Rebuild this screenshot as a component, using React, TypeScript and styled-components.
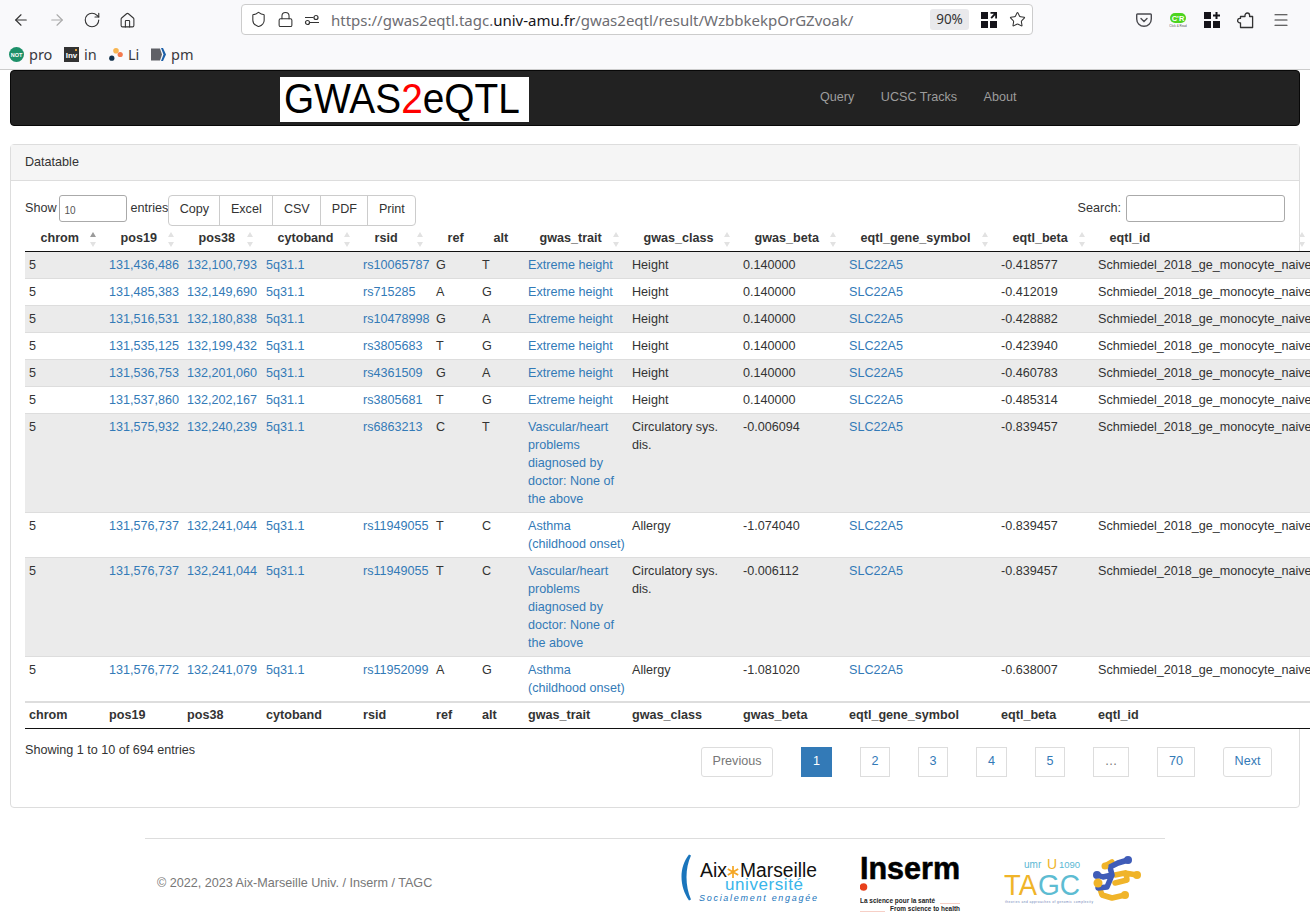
import React from "react";
import styled, { createGlobalStyle } from "styled-components";
import { ArrowLeft, ArrowRight, RotateCw, Home, Shield, Lock, Star, Menu } from "lucide-react";

const blue = "#337ab7";

const GlobalStyle = createGlobalStyle`
  html, body {
    margin: 0;
    padding: 0;
    overflow: hidden;
    background: #fff;
    color: #333;
    font-family: "Liberation Sans", Arial, sans-serif;
    font-size: 12.6px;
    line-height: 18px;
  }
  * { box-sizing: border-box; }
`;

const Page = styled.div`
  width: 1310px;
  height: 917px;
  overflow: hidden;
`;

/* browser chrome */
const Chrome = styled.div`
  height: 70px;
  background: #f9f9fb;
  border-bottom: 1px solid #ccc;
  font-family: "Noto Sans", sans-serif;
  color: #333;
`;

const Toolbar = styled.div`
  height: 40px;
  display: flex;
  align-items: center;
`;

const NavIcons = styled.div`
  width: 241px;
  padding-left: 12px;
  display: flex;
  gap: 17.5px;
  align-items: center;
`;

const UrlBar = styled.div`
  width: 792px;
  height: 31px;
  margin-top: -1px;
  background: #fff;
  border: 1px solid #ccc;
  border-radius: 4px;
  display: flex;
  align-items: center;
  padding-left: 8px;
  gap: 10px;
`;

const UrlText = styled.div`
  flex: 1;
  margin-left: 1px;
  font-size: 15px;
  color: #6d6d72;
  white-space: nowrap;
  b { font-weight: 400; color: #15141a; }
`;

const Zoom = styled.div`
  width: 39px;
  height: 21px;
  background: #e9e9ec;
  border-radius: 3px;
  font-size: 13.5px;
  line-height: 21px;
  text-align: center;
  margin-right: 2px;
`;

const ToolIcons = styled.div`
  margin-left: 103px;
  display: flex;
  gap: 17px;
  align-items: center;
`;

const Bookmarks = styled.div`
  height: 29px;
  padding: 0 0 2px 9px;
  display: flex;
  align-items: center;
  font-size: 14.5px;
  color: #3a3a40;
  svg { margin-top: 2px; }
`;

const Bookmark = styled.div<{ $w: number }>`
  width: ${(p) => p.$w}px;
  display: flex;
  align-items: center;
  gap: 5px;
  white-space: nowrap;
`;

/* navbar */
const NavBar = styled.div`
  margin: 0 10px;
  height: 56px;
  background: #222;
  border: 1px solid #080808;
  border-radius: 4px;
  padding: 6px 0 0 269px;
  display: flex;
  align-items: flex-start;
`;

const Logo = styled.div`
  width: 249px;
  height: 45px;
  background: #fff;
  color: #000;
  padding-left: 4px;
  white-space: nowrap;
`;

const LogoWord = styled.div`
  font-size: 42.5px;
  line-height: 43px;
  transform: scaleX(0.913);
  transform-origin: left center;
  span { color: #f00; }
`;

const NavLinks = styled.div`
  margin-left: 291px;
  display: flex;
  gap: 26.5px;
  height: 39px;
  align-items: center;
`;

const NavLink = styled.a`
  color: #9d9d9d;
`;

/* panel */
const Panel = styled.div`
  margin: 18px 10px 0;
  height: 664px;
  border: 1px solid #ddd;
  border-radius: 4px;
`;

const PanelHead = styled.div`
  height: 36px;
  padding: 8px 14px;
  background: #f5f5f5;
  border-bottom: 1px solid #ddd;
`;

const PanelBody = styled.div`
  padding: 14px 14px 0;
`;

const Controls = styled.div`
  display: flex;
  justify-content: space-between;
  height: 30px;
`;

const LengthGroup = styled.div`
  display: flex;
  align-items: flex-start;
`;

const Label = styled.span`
  line-height: 27px;
`;

const LengthInput = styled.div`
  width: 68px;
  height: 27px;
  margin: 0 4px 0 2px;
  border: 1px solid #aaa;
  border-radius: 3px;
  font-size: 10px;
  line-height: 30px;
  padding-left: 5px;
  color: #555;
`;

const ButtonGroup = styled.div`
  display: flex;
  height: 31px;
  border: 1px solid #ccc;
  border-radius: 4px;
`;

const GroupButton = styled.div<{ $w: number }>`
  width: ${(p) => p.$w}px;
  text-align: center;
  line-height: 26px;
  & + & { border-left: 1px solid #ccc; }
`;

const SearchInput = styled.div`
  width: 159px;
  height: 27px;
  margin-left: 5px;
  border: 1px solid #aaa;
  border-radius: 3px;
`;

const SearchGroup = styled.div`
  display: flex;
  align-items: flex-start;
`;

const Table = styled.table`
  width: 1289px;
  table-layout: fixed;
  border-collapse: separate;
  border-spacing: 0;
  position: relative;
`;

const HeadCell = styled.th<{ $sortable?: boolean; $active?: boolean }>`
  position: relative;
  height: 27px;
  padding: 0 0 1px 15.5px;
  text-align: left;
  font-weight: 700;
  white-space: nowrap;
  border-bottom: 1px solid #111;
  &::before, &::after {
    content: "";
    display: ${(p) => (p.$sortable ? "block" : "none")};
    position: absolute;
    right: 9px;
    border-left: 3px solid transparent;
    border-right: 3px solid transparent;
  }
  &::before {
    top: 7px;
    border-bottom: 5px solid ${(p) => (p.$active ? "#9a9a9a" : "#e2e2e2")};
  }
  &::after {
    top: 17px;
    border-top: 5px solid #e2e2e2;
  }
`;

const Row = styled.tr<{ $striped: boolean }>`
  background: ${(p) => (p.$striped ? "#ebebeb" : "#fff")};
`;

const Cell = styled.td`
  padding: 4px;
  vertical-align: top;
  border-bottom: 1px solid #ddd;
  white-space: nowrap;
`;

const WrapCell = styled(Cell)<{ $tight?: boolean }>`
  white-space: normal;
  padding-right: ${(p) => (p.$tight ? "2px" : "4px")};
`;

const Link = styled.a`
  color: ${blue};
`;

const FootCell = styled.th`
  height: 27px;
  padding: 0 4px 2px;
  text-align: left;
  font-weight: 700;
  border-top: 1px solid #ddd;
  border-bottom: 1px solid #111;
`;

const FootRow = styled.tr`
  background: #fff;
`;

const TableFoot = styled.div`
  display: flex;
  justify-content: space-between;
  padding-right: 13px;
`;

const Info = styled.div`
  padding-top: 12px;
`;

const Pagination = styled.div`
  display: flex;
  gap: 28px;
  padding-top: 18px;
`;

const PageButton = styled.div<{ $w: number; $active?: boolean; $muted?: boolean; $round?: boolean }>`
  width: ${(p) => p.$w}px;
  height: 30px;
  line-height: 26px;
  text-align: center;
  border: 1px solid ${(p) => (p.$active ? blue : "#ddd")};
  border-radius: ${(p) => (p.$round ? "3px" : "0")};
  background: ${(p) => (p.$active ? blue : "#fff")};
  color: ${(p) => (p.$active ? "#fff" : p.$muted ? "#777" : blue)};
`;

/* page footer */
const Footer = styled.div`
  width: 1020px;
  margin: 30px 0 0 145px;
  border-top: 1px solid #ddd;
  display: flex;
  align-items: flex-start;
`;

const Copyright = styled.div`
  width: 535px;
  padding: 35px 0 0 12px;
  color: #777;
`;

const FooterLogos = styled.div`
  display: flex;
  align-items: flex-start;
  padding-top: 14px;
`;

const LogoSvg = styled.svg<{ $mr: number }>`
  display: block;
  margin-right: ${(p) => p.$mr}px;
  font-family: "Liberation Sans", sans-serif;
`;

const columns: [string, number, boolean][] = [
  ["chrom", 80, true],
  ["pos19", 78, true],
  ["pos38", 79, true],
  ["cytoband", 97, true],
  ["rsid", 73, true],
  ["ref", 46, false],
  ["alt", 46, false],
  ["gwas_trait", 104, true],
  ["gwas_class", 111, true],
  ["gwas_beta", 106, true],
  ["eqtl_gene_symbol", 152, true],
  ["eqtl_beta", 97, true],
  ["eqtl_id", 220, true],
];

const vascular = "Vascular/heart problems diagnosed by doctor: None of the above";
const circ = "Circulatory sys. dis.";

const rows = [
  ["131,436,486", "132,100,793", "rs10065787", "G", "T", "Extreme height", "Height", "0.140000", "-0.418577"],
  ["131,485,383", "132,149,690", "rs715285", "A", "G", "Extreme height", "Height", "0.140000", "-0.412019"],
  ["131,516,531", "132,180,838", "rs10478998", "G", "A", "Extreme height", "Height", "0.140000", "-0.428882"],
  ["131,535,125", "132,199,432", "rs3805683", "T", "G", "Extreme height", "Height", "0.140000", "-0.423940"],
  ["131,536,753", "132,201,060", "rs4361509", "G", "A", "Extreme height", "Height", "0.140000", "-0.460783"],
  ["131,537,860", "132,202,167", "rs3805681", "T", "G", "Extreme height", "Height", "0.140000", "-0.485314"],
  ["131,575,932", "132,240,239", "rs6863213", "C", "T", vascular, circ, "-0.006094", "-0.839457"],
  ["131,576,737", "132,241,044", "rs11949055", "T", "C", "Asthma (childhood onset)", "Allergy", "-1.074040", "-0.839457"],
  ["131,576,737", "132,241,044", "rs11949055", "T", "C", vascular, circ, "-0.006112", "-0.839457"],
  ["131,576,772", "132,241,079", "rs11952099", "A", "G", "Asthma (childhood onset)", "Allergy", "-1.081020", "-0.638007"],
];

const pages: { label: string; w: number; active?: boolean; muted?: boolean; round?: boolean }[] = [
  { label: "Previous", w: 72, muted: true, round: true },
  { label: "1", w: 31, active: true },
  { label: "2", w: 30 },
  { label: "3", w: 30 },
  { label: "4", w: 31 },
  { label: "5", w: 30 },
  { label: "…", w: 36, muted: true },
  { label: "70", w: 38 },
  { label: "Next", w: 49, round: true },
];

const PanelGridIcon = ({ plus }: { plus?: boolean }) => (
  <svg width="16" height="16" viewBox="0 0 16 16" fill="#15141a">
    <rect x="0" y="0" width="7" height="7" />
    <rect x="0" y="9" width="7" height="7" />
    <rect x="9" y="9" width="7" height="7" />
    {plus ? (
      <path d="M11.5 0h2v2.5H16v2h-2.5V7h-2V4.500H9v-2h2.500z" />
    ) : (
      <path d="M9.500 0H16v6.500h-1.800V3.200l-3.400 3.600-1.300-1.300 3.400-3.700H9.500z" />
    )}
  </svg>
);

const SliderIcon = () => (
  <svg width="16" height="16" viewBox="0 0 16 16" fill="none" stroke="#333" strokeWidth="1.200">
    <path d="M1 5.500h8.500M6 10.500h9" />
    <circle cx="12" cy="5.500" r="2" />
    <circle cx="3.500" cy="10.500" r="2" fill="#fff" />
  </svg>
);

const PocketIcon = () => (
  <svg width="16" height="16" viewBox="0 0 16 16" fill="none" stroke="#4a4a4f" strokeWidth="1.400">
    <path d="M1.500 2h13a.8.8 0 0 1 .8.8V7a7.300 7.300 0 0 1-14.600 0V2.800a.8.8 0 0 1 .8-.8z" />
    <path d="M5 6.500 8 9.500 11 6.500" strokeLinecap="round" />
  </svg>
);

const ClickReadIcon = () => (
  <svg width="18" height="18" viewBox="0 0 18 18">
    <rect x="1" y="2" width="16" height="10" rx="5" fill="#4cd41f" />
    <text x="9" y="10" textAnchor="middle" fontSize="7.500" fontWeight="700" fill="#fff" fontFamily="Liberation Sans, sans-serif">C'R</text>
    <text x="9" y="16" textAnchor="middle" fontSize="3" fill="#555" fontFamily="Liberation Sans, sans-serif">Click &amp; Read</text>
  </svg>
);

const PuzzleIcon = () => (
  <svg width="18" height="18" viewBox="0 0 18 18" fill="none" stroke="#333" strokeWidth="1.300" strokeLinejoin="round">
    <path d="M3.500 16.500V11.800H2.800a2.200 2.200 0 0 1 0-4.400h.7V5.500H8V4.300a2.300 2.300 0 0 1 4.600 0v1.200h3v11z" />
  </svg>
);

const NotIcon = () => (
  <svg width="15" height="15" viewBox="0 0 15 15">
    <circle cx="7.500" cy="7.500" r="7.500" fill="#1d9069" />
    <text x="7.500" y="9.500" textAnchor="middle" fontSize="5.500" fontWeight="700" fill="#fff" fontFamily="Liberation Sans, sans-serif">NOT</text>
  </svg>
);

const InvIcon = () => (
  <svg width="15" height="15" viewBox="0 0 15 15">
    <rect width="15" height="15" fill="#333" />
    <text x="7.500" y="11" textAnchor="middle" fontSize="8" fontWeight="700" fill="#fff" fontFamily="Liberation Sans, sans-serif">Inv</text>
    <rect x="11" y="2" width="2" height="2" fill="#e9a33a" />
  </svg>
);

const DotsIcon = () => (
  <svg width="14" height="15" viewBox="0 0 15 15">
    <circle cx="7.500" cy="3.500" r="3" fill="#f8b551" />
    <circle cx="12" cy="7.500" r="2.800" fill="#f4794d" />
    <circle cx="3" cy="11.500" r="2.800" fill="#12324e" />
  </svg>
);

const PmIcon = () => (
  <svg width="15" height="15" viewBox="0 0 15 15">
    <path d="M0 1.500h9l2 6-2 6H0z" fill="#5f6066" />
    <path d="M10 1 12 1 15 7.500 12 14 10 14 12.500 7.500z" fill="#1c5fa8" />
  </svg>
);

const AmuLogo = () => (
  <LogoSvg $mr={40} width="140" height="50" viewBox="0 0 140 50">
    <path d="M9 1.500C-1 14-1 33 9 47.500L11 46.500C5 33 5 15 11 2.500z" fill="#1a75bc" />
    <text x="20" y="24" fontSize="20" fill="#111" textLength="27" lengthAdjust="spacingAndGlyphs">Aix</text>
    <path d="M53 13v12M47.800 16l10.400 6M47.800 22l10.400-6" stroke="#f5a623" strokeWidth="1.700" />
    <text x="60" y="24" fontSize="20" fill="#111" textLength="77" lengthAdjust="spacingAndGlyphs">Marseille</text>
    <text x="45" y="37" fontSize="17" fill="#39b5ea" textLength="78" lengthAdjust="spacing">université</text>
    <text x="19" y="48" fontSize="9" fontStyle="italic" fill="#1a75bc" textLength="118" lengthAdjust="spacing">Socialement engagée</text>
  </LogoSvg>
);

const InsermLogo = () => (
  <LogoSvg $mr={41} width="103" height="60" viewBox="0 0 103 60">
    <text x="0" y="26" fontSize="32" fontWeight="700" fill="#000" stroke="#000" strokeWidth="0.600" textLength="100" lengthAdjust="spacingAndGlyphs">Inserm</text>
    <circle cx="3.500" cy="34" r="3.800" fill="#e8401c" />
    <text x="0" y="50" fontSize="6.300" fontWeight="700" fill="#222" textLength="75" lengthAdjust="spacingAndGlyphs">La science pour la santé</text>
    <rect x="80" y="50" width="20" height="1" fill="#f6cfc6" />
    <rect x="0" y="58" width="25" height="1" fill="#f6cfc6" />
    <text x="30" y="58" fontSize="6.300" fontWeight="700" fill="#222" textLength="70" lengthAdjust="spacingAndGlyphs">From science to health</text>
  </LogoSvg>
);

const TagcLogo = () => (
  <LogoSvg $mr={0} width="138" height="52" viewBox="0 0 138 52">
    <text x="20" y="15" fontSize="10" fill="#5bb8d4">umr</text>
    <text x="43" y="16" fontSize="14" fill="#f0b429">U</text>
    <text x="55" y="15" fontSize="9.500" fill="#5bb8d4">1090</text>
    <text x="0" y="42" fontSize="29" fill="#f0b429" textLength="33" lengthAdjust="spacingAndGlyphs">TA</text>
    <text x="34" y="42" fontSize="29" fill="#5dbcd2" textLength="42" lengthAdjust="spacingAndGlyphs">GC</text>
    <text x="1" y="50" fontSize="3.200" fill="#6a7fb5" textLength="88">theories and approaches of genomic complexity</text>
    <g fill="none" strokeLinecap="round" strokeLinejoin="round" strokeWidth="5.500">
      <path d="M101 13 108 9" stroke="#f0b429" />
      <path d="M111 22 121 20 133 22M122 20 123 27 111 30" stroke="#f0b429" />
      <path d="M94 30 98 42 108 45 121 42" stroke="#f0b429" />
      <path d="M124 7 114 10 106 14 108 22 103 34 94 35M93 22 99 24 108 22" stroke="#3f5cb8" />
    </g>
    <g fill="#3f5cb8">
      <circle cx="124" cy="7" r="4" />
      <circle cx="93" cy="22" r="4" />
    </g>
    <g fill="#f0b429">
      <circle cx="133" cy="22" r="4" />
      <circle cx="94" cy="30" r="4.500" />
      <circle cx="121" cy="42" r="4" />
      <circle cx="101" cy="13" r="3.500" />
    </g>
  </LogoSvg>
);

const App = () => {
  return (
    <Page>
      <GlobalStyle />
      <Chrome>
        <Toolbar>
          <NavIcons>
            <ArrowLeft size={18} strokeWidth={1.5} color="#333" />
            <ArrowRight size={18} strokeWidth={1.5} color="#aaa" />
            <RotateCw size={18} strokeWidth={1.5} color="#333" />
            <Home size={17} strokeWidth={1.5} color="#333" />
          </NavIcons>
          <UrlBar>
            <Shield size={17} strokeWidth={1.5} color="#333" />
            <Lock size={17} strokeWidth={1.5} color="#333" />
            <SliderIcon />
            <UrlText>
              https://gwas2eqtl.tagc.<b>univ-amu.fr</b>/gwas2eqtl/result/WzbbkekpOrGZvoak/
            </UrlText>
            <Zoom>90%</Zoom>
            <PanelGridIcon />
            <Star size={17} strokeWidth={1.5} color="#333" style={{ marginLeft: 2, marginRight: 6 }} />
          </UrlBar>
          <ToolIcons>
            <PocketIcon />
            <ClickReadIcon />
            <PanelGridIcon plus />
            <PuzzleIcon />
            <Menu size={18} strokeWidth={1.5} color="#333" />
          </ToolIcons>
        </Toolbar>
        <Bookmarks>
          <Bookmark $w={55}><NotIcon />pro</Bookmark>
          <Bookmark $w={45}><InvIcon />in</Bookmark>
          <Bookmark $w={42}><DotsIcon />Li</Bookmark>
          <Bookmark $w={50}><PmIcon />pm</Bookmark>
        </Bookmarks>
      </Chrome>

      <NavBar>
        <Logo>
          <LogoWord>GWAS<span>2</span>eQTL</LogoWord>
        </Logo>
        <NavLinks>
          <NavLink>Query</NavLink>
          <NavLink>UCSC Tracks</NavLink>
          <NavLink>About</NavLink>
        </NavLinks>
      </NavBar>

      <Panel>
        <PanelHead>Datatable</PanelHead>
        <PanelBody>
          <Controls>
            <LengthGroup>
              <Label>Show</Label>
              <LengthInput>10</LengthInput>
              <Label>entries</Label>
              <ButtonGroup>
                <GroupButton $w={50}>Copy</GroupButton>
                <GroupButton $w={53}>Excel</GroupButton>
                <GroupButton $w={48}>CSV</GroupButton>
                <GroupButton $w={47}>PDF</GroupButton>
                <GroupButton $w={48}>Print</GroupButton>
              </ButtonGroup>
            </LengthGroup>
            <SearchGroup>
              <Label>Search:</Label>
              <SearchInput />
            </SearchGroup>
          </Controls>
          <Table>
            <colgroup>
              {columns.map(([name, w]) => (
                <col key={name} width={w} />
              ))}
            </colgroup>
            <thead>
              <tr>
                {columns.map(([name, , sortable], i) => (
                  <HeadCell key={name} $sortable={sortable} $active={i === 0}>
                    {name}
                  </HeadCell>
                ))}
              </tr>
            </thead>
            <tbody>
              {rows.map((r, i) => (
                <Row key={i} $striped={i % 2 === 0}>
                  <Cell>5</Cell>
                  <Cell><Link>{r[0]}</Link></Cell>
                  <Cell><Link>{r[1]}</Link></Cell>
                  <Cell><Link>5q31.1</Link></Cell>
                  <Cell><Link>{r[2]}</Link></Cell>
                  <Cell>{r[3]}</Cell>
                  <Cell>{r[4]}</Cell>
                  <WrapCell $tight><Link>{r[5]}</Link></WrapCell>
                  <WrapCell>{r[6]}</WrapCell>
                  <Cell>{r[7]}</Cell>
                  <Cell><Link>SLC22A5</Link></Cell>
                  <Cell>{r[8]}</Cell>
                  <Cell>Schmiedel_2018_ge_monocyte_naive</Cell>
                </Row>
              ))}
            </tbody>
            <tfoot>
              <FootRow>
                {columns.map(([name]) => (
                  <FootCell key={name}>{name}</FootCell>
                ))}
              </FootRow>
            </tfoot>
          </Table>
          <TableFoot>
            <Info>Showing 1 to 10 of 694 entries</Info>
            <Pagination>
              {pages.map((p) => (
                <PageButton key={p.label} $w={p.w} $active={p.active} $muted={p.muted} $round={p.round}>
                  {p.label}
                </PageButton>
              ))}
            </Pagination>
          </TableFoot>
        </PanelBody>
      </Panel>

      <Footer>
        <Copyright>© 2022, 2023 Aix-Marseille Univ. / Inserm / TAGC</Copyright>
        <FooterLogos>
          <AmuLogo />
          <InsermLogo />
          <TagcLogo />
        </FooterLogos>
      </Footer>
    </Page>
  );
};

export default App;
